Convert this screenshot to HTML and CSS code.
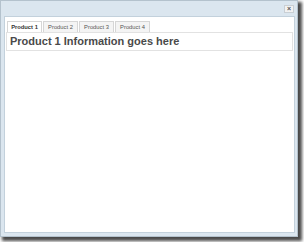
FILE: index.html
```html
<!DOCTYPE html>
<html>
<head>
<meta charset="utf-8">
<link rel="stylesheet" href="styles.css">
</head>
<body>
<div class="window">
  <div class="titlebar">
    <button class="close" aria-label="Close">×</button>
  </div>
  <div class="content">
    <div class="tabs">
      <div class="tab active">Product 1</div>
      <div class="tab">Product 2</div>
      <div class="tab">Product 3</div>
      <div class="tab">Product 4</div>
    </div>
    <div class="panel">
      <h1 class="heading">Product 1 Information goes here</h1>
    </div>
  </div>
</div>
</body>
</html>
```
FILE: styles.css
```css
html, body {
  margin: 0;
  padding: 0;
  background: #ffffff;
}
body {
  width: 304px;
  height: 242px;
  overflow: hidden;
  font-family: "Liberation Sans", Arial, sans-serif;
}
.window {
  box-sizing: border-box;
  width: 298px;
  height: 237px;
  background: #dbe6ef;
  border: 1px solid #b4c2cd;
  box-shadow: 3px 3px 3px 1px #4a4a4a;
  padding: 0 2px 3px 3px;
  display: flex;
  flex-direction: column;
}
.titlebar {
  height: 15px;
  display: flex;
  justify-content: flex-end;
  align-items: center;
  padding-right: 1px;
}
.close {
  box-sizing: border-box;
  width: 10px;
  height: 8px;
  padding: 0;
  margin: 0;
  border: 1px solid #c9cfd4;
  background: #f2f2f2;
  color: #555;
  font: bold 7px/6px "Liberation Sans", Arial, sans-serif;
  display: flex;
  align-items: center;
  justify-content: center;
}
.content {
  flex: 1;
  background: #ffffff;
  border: 1px solid #c3d1dc;
  padding: 4px 1px 0 1px;
}
.tabs {
  display: flex;
  gap: 1px;
  padding-left: 1px;
}
.tab {
  box-sizing: border-box;
  width: 35px;
  height: 11px;
  border: 1px solid #d6d6d6;
  border-bottom: none;
  background: #f4f4f4;
  color: #555;
  font-size: 5.8px;
  line-height: 10px;
  text-align: center;
}
.tab.active {
  background: #ffffff;
  color: #333;
  font-weight: bold;
}
.panel {
  border: 1px solid #e2e2e2;
  padding: 2px 3px 2px;
}
.heading {
  margin: 0;
  font-size: 11px;
  line-height: 13px;
  font-weight: bold;
  color: #4a4a4a;
}
```
